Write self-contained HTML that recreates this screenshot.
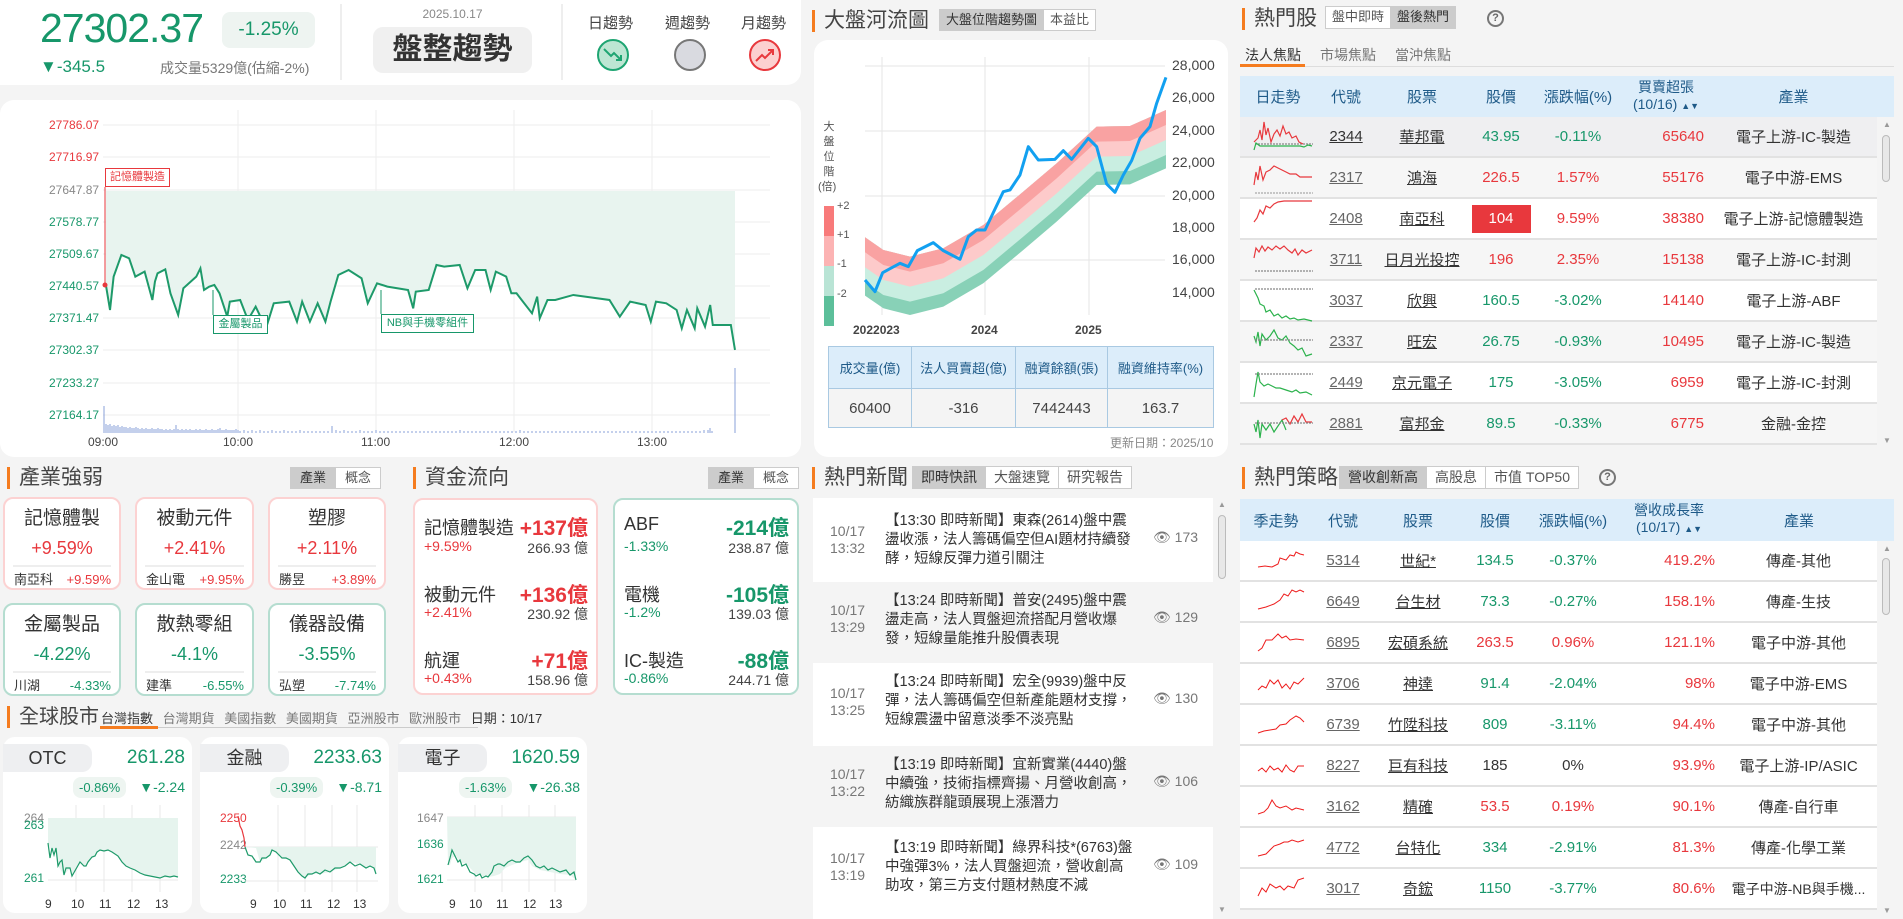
<!DOCTYPE html>
<html><head><meta charset="utf-8">
<style>
*{margin:0;padding:0;box-sizing:border-box}
body{width:1903px;height:919px;background:#f4f4f4;font-family:"Liberation Sans","Noto Sans CJK TC",sans-serif;color:#333;position:relative;overflow:hidden}
.a{position:absolute}
.card{position:absolute;background:#fff;border-radius:14px}
.g{color:#17976a}.r{color:#e8383d}
.ttl{position:absolute;font-size:21px;color:#444;padding-left:9px;border-left:3px solid #f57c1f;line-height:22px}
.tabs{position:absolute;display:flex;border:1px solid #ccc;background:#fff;font-size:13px;color:#555;height:22px}
.tabs span{padding:0 6px;line-height:20px;border-left:1px solid #ccc}
.tabs span:first-child{border-left:none}
.tabs .on{background:#ccc;color:#333}
.ic{position:absolute;border-radius:10px;background:#fff;text-align:center}
.ic.p{border:2px solid #fcd2d2}.ic.q{border:2px solid #b5ddd0}
.ic .n{font-size:19px;color:#333;margin-top:8px;line-height:24px}
.ic .v{font-size:18px;margin-top:6px;line-height:22px}
.ic .hr{margin:6px 8px 0;border-top:2px solid #eee}
.ic .b{display:flex;justify-content:space-between;padding:4px 8px 0 9px;font-size:13px;line-height:18px}
.fr{position:absolute;left:0;right:0;height:24px}
.fr .nm{position:absolute;left:9px;font-size:18px;color:#333;top:2px}
.fr .vl{position:absolute;right:8px;font-size:21px;font-weight:bold}
.fs{position:absolute;left:9px;right:8px;font-size:14px;display:flex;justify-content:space-between}
.fs .c{color:#444}
.th{position:absolute;left:1240px;width:654px;background:#dcedfa;display:flex;color:#1e5a88;font-size:15px;align-items:center}
.row{position:absolute;left:1240px;width:637px;height:41px;display:flex;align-items:center;border-bottom:2px solid #e2e2e2;font-size:15px}
.row>div,.th>div{text-align:center}
.row u{text-decoration:underline}
.cd{color:#666}
.news{position:absolute;left:813px;width:400px;font-size:14.5px;line-height:19px;color:#333}
.news .d{position:absolute;left:17px;font-size:14px;color:#777;line-height:17px}
.news .t{position:absolute;left:72px;width:252px}
.news .e{position:absolute;left:340px;font-size:14px;color:#777}
.mk{position:absolute;background:#fff;border-radius:12px}
.mk .h{position:absolute;left:0;top:7px;width:89px;height:28px;background:#eeeff1;border-radius:0 10px 10px 0;font-size:18px;text-align:center;line-height:28px;color:#333}
.mk .v{position:absolute;right:7px;top:10px;font-size:19px}
.mk .bd{position:absolute;top:40px;height:21px;background:#eef5f1;border-radius:8px;font-size:13px;line-height:21px;padding:0 6px}
.mk .ch{position:absolute;right:7px;top:42px;font-size:14px}
.mk .xl{position:absolute;top:160px;font-size:12px;color:#333}
.mk .yl{position:absolute;font-size:12px}
</style></head><body>

<div class="card" style="left:0;top:0;width:801px;height:85px;border-radius:0 0 14px 0"></div>
<div class="a g" style="left:40px;top:5px;font-size:41px;letter-spacing:-1px">27302.37</div>
<div class="a g" style="left:222px;top:12px;width:93px;height:36px;background:#eef4f1;border-radius:8px;font-size:19px;text-align:center;line-height:36px">-1.25%</div>
<div class="a g" style="left:40px;top:57px;font-size:17px">▼-345.5</div>
<div class="a" style="left:160px;top:58px;font-size:14px;color:#777">成交量5329億(估縮-2%)</div>
<div class="a" style="left:340px;top:4px;width:2px;height:76px;background:#eee"></div>
<div class="a" style="left:373px;top:7px;width:159px;text-align:center;font-size:12px;color:#888">2025.10.17</div>
<div class="a" style="left:373px;top:27px;width:159px;height:46px;background:#f0f0f0;border-radius:10px;text-align:center;font-size:30px;font-weight:bold;line-height:46px;color:#333">盤整趨勢</div>
<div class="a" style="left:561px;top:4px;width:2px;height:76px;background:#eee"></div>
<div class="a" style="left:588px;top:12px;font-size:15px;color:#444">日趨勢</div>
<div class="a" style="left:665px;top:12px;font-size:15px;color:#444">週趨勢</div>
<div class="a" style="left:741px;top:12px;font-size:15px;color:#444">月趨勢</div>

<div class="card" style="left:0;top:100px;width:801px;height:357px"></div>
<div class="a r" style="left:49px;top:118px;font-size:12px">27786.07</div>
<div class="a r" style="left:49px;top:150px;font-size:12px">27716.97</div>
<div class="a" style="left:49px;top:183px;font-size:12px;color:#888">27647.87</div>
<div class="a g" style="left:49px;top:215px;font-size:12px">27578.77</div>
<div class="a g" style="left:49px;top:247px;font-size:12px">27509.67</div>
<div class="a g" style="left:49px;top:279px;font-size:12px">27440.57</div>
<div class="a g" style="left:49px;top:311px;font-size:12px">27371.47</div>
<div class="a g" style="left:49px;top:343px;font-size:12px">27302.37</div>
<div class="a g" style="left:49px;top:376px;font-size:12px">27233.27</div>
<div class="a g" style="left:49px;top:408px;font-size:12px">27164.17</div>
<div class="a" style="left:88px;top:435px;font-size:12px;color:#444">09:00</div>
<div class="a" style="left:223px;top:435px;font-size:12px;color:#444">10:00</div>
<div class="a" style="left:361px;top:435px;font-size:12px;color:#444">11:00</div>
<div class="a" style="left:499px;top:435px;font-size:12px;color:#444">12:00</div>
<div class="a" style="left:637px;top:435px;font-size:12px;color:#444">13:00</div>
<div class="a r" style="left:105px;top:168px;width:65px;height:19px;border:1px solid #e8383d;background:#fff;font-size:11px;text-align:center;line-height:17px;z-index:3">記憶體製造</div>
<div class="a g" style="left:213px;top:315px;width:55px;height:19px;border:1px solid #17976a;background:#fff;font-size:11px;text-align:center;line-height:17px;z-index:3">金屬製品</div>
<div class="a g" style="left:381px;top:314px;width:93px;height:19px;border:1px solid #17976a;background:#fff;font-size:11px;text-align:center;line-height:17px;z-index:3">NB與手機零組件</div>

<div class="ttl" style="left:812px;top:10px">大盤河流圖</div>
<div class="tabs" style="left:939px;top:9px"><span class="on">大盤位階趨勢圖</span><span>本益比</span></div>
<div class="card" style="left:814px;top:40px;width:414px;height:417px"></div>
<div class="a" style="left:1172px;top:57px;font-size:14px;color:#444;line-height:16px">28,000</div>
<div class="a" style="left:1172px;top:89px;font-size:14px;color:#444">26,000</div>
<div class="a" style="left:1172px;top:122px;font-size:14px;color:#444">24,000</div>
<div class="a" style="left:1172px;top:154px;font-size:14px;color:#444">22,000</div>
<div class="a" style="left:1172px;top:187px;font-size:14px;color:#444">20,000</div>
<div class="a" style="left:1172px;top:219px;font-size:14px;color:#444">18,000</div>
<div class="a" style="left:1172px;top:251px;font-size:14px;color:#444">16,000</div>
<div class="a" style="left:1172px;top:284px;font-size:14px;color:#444">14,000</div>
<div class="a" style="left:853px;top:323px;font-size:12px;font-weight:bold;color:#444">2022023</div>
<div class="a" style="left:971px;top:323px;font-size:12px;font-weight:bold;color:#444">2024</div>
<div class="a" style="left:1075px;top:323px;font-size:12px;font-weight:bold;color:#444">2025</div>
<div class="a" style="left:822px;top:120px;width:14px;font-size:11px;color:#555;line-height:15px;text-align:center">大<br>盤<br>位<br>階<br><span style="margin-left:-4px">(倍)</span></div>
<div class="a" style="left:824px;top:206px;width:10px;height:30px;background:#f87a7a"></div>
<div class="a" style="left:824px;top:236px;width:10px;height:30px;background:#fcb3b3"></div>
<div class="a" style="left:824px;top:266px;width:10px;height:30px;background:#b9e4d5"></div>
<div class="a" style="left:824px;top:296px;width:10px;height:30px;background:#5cbf9a"></div>
<div class="a" style="left:837px;top:200px;font-size:11px;color:#555">+2</div>
<div class="a" style="left:837px;top:229px;font-size:11px;color:#555">+1</div>
<div class="a" style="left:837px;top:258px;font-size:11px;color:#555">-1</div>
<div class="a" style="left:837px;top:288px;font-size:11px;color:#555">-2</div>
<table class="a" style="left:828px;top:346px;width:386px;border-collapse:collapse;font-size:13px;text-align:center">
<tr style="height:42px;background:#dcedfa;color:#1e5a88"><td style="border:1px solid #a9c9e2;width:83px">成交量(億)</td><td style="border:1px solid #a9c9e2;width:104px">法人買賣超(億)</td><td style="border:1px solid #a9c9e2;width:92px">融資餘額(張)</td><td style="border:1px solid #a9c9e2">融資維持率(%)</td></tr>
<tr style="height:39px;background:#f4f4f4;font-size:15px;color:#444"><td style="border:1px solid #a9c9e2">60400</td><td style="border:1px solid #a9c9e2">-316</td><td style="border:1px solid #a9c9e2">7442443</td><td style="border:1px solid #a9c9e2">163.7</td></tr>
</table>
<div class="a" style="left:1110px;top:434px;font-size:12px;color:#888">更新日期：2025/10</div>

<div class="ttl" style="left:1242px;top:8px">熱門股</div>
<div class="tabs" style="left:1325px;top:6px;height:23px"><span>盤中即時</span><span class="on">盤後熱門</span></div>
<div class="a" style="left:1487px;top:10px;width:17px;height:17px;border:2px solid #777;border-radius:50%;font-size:11px;text-align:center;line-height:13px;color:#666;font-weight:bold">?</div>
<div class="a" style="left:1240px;top:66px;width:654px;height:1px;background:#ddd"></div>
<div class="a" style="left:1240px;top:64px;width:65px;height:3px;background:#f57c1f"></div>
<div class="a" style="left:1245px;top:45px;font-size:14px;color:#333">法人焦點</div>
<div class="a" style="left:1320px;top:45px;font-size:14px;color:#777">市場焦點</div>
<div class="a" style="left:1395px;top:45px;font-size:14px;color:#777">當沖焦點</div>
<div class="th" style="top:76px;height:41px"><div style="width:76px">日走勢</div><div style="width:60px">代號</div><div style="width:92px">股票</div><div style="width:66px">股價</div><div style="width:88px">漲跌幅(%)</div><div style="width:88px;line-height:17px;font-size:14px">買賣超張<br>(10/16) <span style="font-size:9px">▲▼</span></div><div style="width:167px">產業</div></div>

<div class="row" style="top:117px;background:#efeff1"><div style="width:76px"></div><div style="width:60px"><u>2344</u></div><div style="width:92px"><u>華邦電</u></div><div class="g" style="width:66px">43.95</div><div class="g" style="width:88px">-0.11%</div><div class="r" style="width:88px;text-align:right;padding-right:6px">65640</div><div style="width:167px">電子上游-IC-製造</div></div>
<div class="row" style="top:158px;background:#f6f6f6"><div style="width:76px"></div><div class="cd" style="width:60px"><u>2317</u></div><div style="width:92px"><u>鴻海</u></div><div class="r" style="width:66px">226.5</div><div class="r" style="width:88px">1.57%</div><div class="r" style="width:88px;text-align:right;padding-right:6px">55176</div><div style="width:167px">電子中游-EMS</div></div>
<div class="row" style="top:199px;background:#fff"><div style="width:76px"></div><div class="cd" style="width:60px"><u>2408</u></div><div style="width:92px"><u>南亞科</u></div><div style="width:66px;display:flex;justify-content:center"><span style="background:#e8383d;color:#fff;width:59px;height:28px;line-height:28px">104</span></div><div class="r" style="width:88px">9.59%</div><div class="r" style="width:88px;text-align:right;padding-right:6px">38380</div><div style="width:167px">電子上游-記憶體製造</div></div>
<div class="row" style="top:240px;background:#f6f6f6"><div style="width:76px"></div><div class="cd" style="width:60px"><u>3711</u></div><div style="width:92px"><u>日月光投控</u></div><div class="r" style="width:66px">196</div><div class="r" style="width:88px">2.35%</div><div class="r" style="width:88px;text-align:right;padding-right:6px">15138</div><div style="width:167px">電子上游-IC-封測</div></div>
<div class="row" style="top:281px;background:#fff"><div style="width:76px"></div><div class="cd" style="width:60px"><u>3037</u></div><div style="width:92px"><u>欣興</u></div><div class="g" style="width:66px">160.5</div><div class="g" style="width:88px">-3.02%</div><div class="r" style="width:88px;text-align:right;padding-right:6px">14140</div><div style="width:167px">電子上游-ABF</div></div>
<div class="row" style="top:322px;background:#f6f6f6"><div style="width:76px"></div><div class="cd" style="width:60px"><u>2337</u></div><div style="width:92px"><u>旺宏</u></div><div class="g" style="width:66px">26.75</div><div class="g" style="width:88px">-0.93%</div><div class="r" style="width:88px;text-align:right;padding-right:6px">10495</div><div style="width:167px">電子上游-IC-製造</div></div>
<div class="row" style="top:363px;background:#fff"><div style="width:76px"></div><div class="cd" style="width:60px"><u>2449</u></div><div style="width:92px"><u>京元電子</u></div><div class="g" style="width:66px">175</div><div class="g" style="width:88px">-3.05%</div><div class="r" style="width:88px;text-align:right;padding-right:6px">6959</div><div style="width:167px">電子上游-IC-封測</div></div>
<div class="row" style="top:404px;background:#f6f6f6"><div style="width:76px"></div><div class="cd" style="width:60px"><u>2881</u></div><div style="width:92px"><u>富邦金</u></div><div class="g" style="width:66px">89.5</div><div class="g" style="width:88px">-0.33%</div><div class="r" style="width:88px;text-align:right;padding-right:6px">6775</div><div style="width:167px">金融-金控</div></div>
<div class="a" style="left:1883px;top:120px;font-size:8px;color:#999">▲</div>
<div class="a" style="left:1882px;top:135px;width:8px;height:47px;border:1px solid #bbb;border-radius:4px;background:#e8e8e8"></div>
<div class="a" style="left:1883px;top:436px;font-size:8px;color:#999">▼</div>

<div class="ttl" style="left:7px;top:467px">產業強弱</div>
<div class="tabs" style="left:290px;top:467px"><span class="on" style="padding:0 9px">產業</span><span style="padding:0 9px">概念</span></div>
<div class="ic p" style="left:3px;top:497px;width:118px;height:93px"><div class="n">記憶體製</div><div class="v r">+9.59%</div><div class="hr"></div><div class="b"><span>南亞科</span><span class="r">+9.59%</span></div></div>
<div class="ic p" style="left:135px;top:497px;width:119px;height:93px"><div class="n">被動元件</div><div class="v r">+2.41%</div><div class="hr"></div><div class="b"><span>金山電</span><span class="r">+9.95%</span></div></div>
<div class="ic p" style="left:268px;top:497px;width:118px;height:93px"><div class="n">塑膠</div><div class="v r">+2.11%</div><div class="hr"></div><div class="b"><span>勝昱</span><span class="r">+3.89%</span></div></div>
<div class="ic q" style="left:3px;top:603px;width:118px;height:93px"><div class="n">金屬製品</div><div class="v g">-4.22%</div><div class="hr"></div><div class="b"><span>川湖</span><span class="g">-4.33%</span></div></div>
<div class="ic q" style="left:135px;top:603px;width:119px;height:93px"><div class="n">散熱零組</div><div class="v g">-4.1%</div><div class="hr"></div><div class="b"><span>建準</span><span class="g">-6.55%</span></div></div>
<div class="ic q" style="left:268px;top:603px;width:118px;height:93px"><div class="n">儀器設備</div><div class="v g">-3.55%</div><div class="hr"></div><div class="b"><span>弘塑</span><span class="g">-7.74%</span></div></div>

<div class="ttl" style="left:413px;top:467px">資金流向</div>
<div class="tabs" style="left:708px;top:467px"><span class="on" style="padding:0 9px">產業</span><span style="padding:0 9px">概念</span></div>
<div class="ic p" style="left:413px;top:498px;width:185px;height:197px;text-align:left">
 <div class="fr" style="top:12px"><span class="nm">記憶體製造</span><span class="vl r">+137億</span></div>
 <div class="fs" style="top:38px"><span class="r">+9.59%</span><span class="c">266.93 億</span></div>
 <div class="fr" style="top:79px"><span class="nm">被動元件</span><span class="vl r">+136億</span></div>
 <div class="fs" style="top:104px"><span class="r">+2.41%</span><span class="c">230.92 億</span></div>
 <div class="fr" style="top:145px"><span class="nm">航運</span><span class="vl r">+71億</span></div>
 <div class="fs" style="top:170px"><span class="r">+0.43%</span><span class="c">158.96 億</span></div>
</div>
<div class="ic q" style="left:613px;top:498px;width:186px;height:197px;text-align:left">
 <div class="fr" style="top:12px"><span class="nm">ABF</span><span class="vl g">-214億</span></div>
 <div class="fs" style="top:38px"><span class="g">-1.33%</span><span class="c">238.87 億</span></div>
 <div class="fr" style="top:79px"><span class="nm">電機</span><span class="vl g">-105億</span></div>
 <div class="fs" style="top:104px"><span class="g">-1.2%</span><span class="c">139.03 億</span></div>
 <div class="fr" style="top:145px"><span class="nm">IC-製造</span><span class="vl g">-88億</span></div>
 <div class="fs" style="top:170px"><span class="g">-0.86%</span><span class="c">244.71 億</span></div>
</div>

<div class="ttl" style="left:7px;top:706px;font-size:20px;line-height:22px">全球股市</div>
<div class="a" style="left:158px;top:727px;width:320px;height:1px;background:#ccc"></div>
<div class="a" style="left:100px;top:726px;width:58px;height:3px;background:#f57c1f"></div>
<div class="a" style="left:101px;top:708px;font-size:13px;color:#333;word-spacing:6px;white-space:nowrap">台灣指數 <span style="color:#777">台灣期貨 美國指數 美國期貨 亞洲股市 歐洲股市</span> 日期：10/17</div>

<div class="mk" style="left:3px;top:737px;width:189px;height:176px"><div class="h">OTC</div><div class="v g">261.28</div><div class="bd g" style="left:70px">-0.86%</div><div class="ch g">▼-2.24</div>
 <div class="yl" style="left:21px;top:74px;color:#888">264</div><div class="yl g" style="left:21px;top:81px">263</div><div class="yl g" style="left:21px;top:134px">261</div>
 <div class="xl" style="left:42px">9</div><div class="xl" style="left:68px">10</div><div class="xl" style="left:96px">11</div><div class="xl" style="left:124px">12</div><div class="xl" style="left:152px">13</div></div>
<div class="mk" style="left:200px;top:737px;width:189px;height:176px"><div class="h">金融</div><div class="v g">2233.63</div><div class="bd g" style="left:70px">-0.39%</div><div class="ch g">▼-8.71</div>
 <div class="yl r" style="left:20px;top:74px">2250</div><div class="yl" style="left:20px;top:101px;color:#888">2242</div><div class="yl g" style="left:20px;top:135px">2233</div>
 <div class="xl" style="left:50px">9</div><div class="xl" style="left:73px">10</div><div class="xl" style="left:100px">11</div><div class="xl" style="left:127px">12</div><div class="xl" style="left:153px">13</div></div>
<div class="mk" style="left:398px;top:737px;width:189px;height:176px"><div class="h">電子</div><div class="v g">1620.59</div><div class="bd g" style="left:61px">-1.63%</div><div class="ch g">▼-26.38</div>
 <div class="yl" style="left:19px;top:74px;color:#888">1647</div><div class="yl g" style="left:19px;top:100px">1636</div><div class="yl g" style="left:19px;top:135px">1621</div>
 <div class="xl" style="left:51px">9</div><div class="xl" style="left:71px">10</div><div class="xl" style="left:98px">11</div><div class="xl" style="left:125px">12</div><div class="xl" style="left:151px">13</div></div>

<div class="ttl" style="left:812px;top:467px">熱門新聞</div>
<div class="tabs" style="left:912px;top:466px;height:23px;font-size:14px"><span class="on" style="padding:0 8px">即時快訊</span><span style="padding:0 8px">大盤速覽</span><span style="padding:0 8px">研究報告</span></div>
<div class="news" style="top:498px;height:84px;background:#fff"><div class="d" style="top:25px">10/17<br>13:32</div><div class="t" style="top:14px">【13:30 即時新聞】東森(2614)盤中震盪收漲，法人籌碼偏空但AI題材持續發酵，短線反彈力道引關注</div><div class="e" style="top:30px">👁 173</div></div>
<div class="news" style="top:582px;height:81px;background:#f4f4f4"><div class="d" style="top:20px">10/17<br>13:29</div><div class="t" style="top:10px">【13:24 即時新聞】普安(2495)盤中震盪走高，法人買盤迴流搭配月營收爆發，短線量能推升股價表現</div><div class="e" style="top:26px">👁 129</div></div>
<div class="news" style="top:663px;height:83px;background:#fff"><div class="d" style="top:22px">10/17<br>13:25</div><div class="t" style="top:10px">【13:24 即時新聞】宏全(9939)盤中反彈，法人籌碼偏空但新產能題材支撐，短線震盪中留意淡季不淡亮點</div><div class="e" style="top:26px">👁 130</div></div>
<div class="news" style="top:746px;height:81px;background:#f4f4f4"><div class="d" style="top:20px">10/17<br>13:22</div><div class="t" style="top:10px">【13:19 即時新聞】宜新實業(4440)盤中續強，技術指標齊揚、月營收創高，紡織族群龍頭展現上漲潛力</div><div class="e" style="top:26px">👁 106</div></div>
<div class="news" style="top:827px;height:92px;background:#fff"><div class="d" style="top:23px">10/17<br>13:19</div><div class="t" style="top:12px">【13:19 即時新聞】綠界科技*(6763)盤中強彈3%，法人買盤迴流，營收創高助攻，第三方支付題材熱度不減</div><div class="e" style="top:28px">👁 109</div></div>
<div class="a" style="left:1218px;top:500px;font-size:8px;color:#999">▲</div>
<div class="a" style="left:1218px;top:515px;width:8px;height:64px;border:1px solid #bbb;border-radius:4px;background:#e8e8e8"></div>
<div class="a" style="left:1218px;top:905px;font-size:8px;color:#999">▼</div>

<div class="ttl" style="left:1242px;top:467px">熱門策略</div>
<div class="tabs" style="left:1339px;top:466px;height:23px;font-size:14px"><span class="on" style="padding:0 8px">營收創新高</span><span style="padding:0 8px">高股息</span><span style="padding:0 8px">市值 TOP50</span></div>
<div class="a" style="left:1599px;top:469px;width:17px;height:17px;border:2px solid #777;border-radius:50%;font-size:11px;text-align:center;line-height:13px;color:#666;font-weight:bold">?</div>
<div class="th" style="top:499px;height:42px"><div style="width:72px">季走勢</div><div style="width:62px">代號</div><div style="width:88px">股票</div><div style="width:66px">股價</div><div style="width:90px">漲跌幅(%)</div><div style="width:102px;line-height:17px;font-size:14px">營收成長率<br>(10/17) <span style="font-size:9px">▲▼</span></div><div style="width:158px">產業</div></div>

<div class="row" style="top:541px;background:#fff"><div style="width:72px"></div><div class="cd" style="width:62px"><u>5314</u></div><div style="width:88px"><u>世紀*</u></div><div class="g" style="width:66px">134.5</div><div class="g" style="width:90px">-0.37%</div><div class="r" style="width:102px;text-align:right;padding-right:5px">419.2%</div><div style="width:157px">傳產-其他</div></div>
<div class="row" style="top:582px;background:#fff"><div style="width:72px"></div><div class="cd" style="width:62px"><u>6649</u></div><div style="width:88px"><u>台生材</u></div><div class="g" style="width:66px">73.3</div><div class="g" style="width:90px">-0.27%</div><div class="r" style="width:102px;text-align:right;padding-right:5px">158.1%</div><div style="width:157px">傳產-生技</div></div>
<div class="row" style="top:623px;background:#fff"><div style="width:72px"></div><div class="cd" style="width:62px"><u>6895</u></div><div style="width:88px"><u>宏碩系統</u></div><div class="r" style="width:66px">263.5</div><div class="r" style="width:90px">0.96%</div><div class="r" style="width:102px;text-align:right;padding-right:5px">121.1%</div><div style="width:157px">電子中游-其他</div></div>
<div class="row" style="top:664px;background:#fff"><div style="width:72px"></div><div class="cd" style="width:62px"><u>3706</u></div><div style="width:88px"><u>神達</u></div><div class="g" style="width:66px">91.4</div><div class="g" style="width:90px">-2.04%</div><div class="r" style="width:102px;text-align:right;padding-right:5px">98%</div><div style="width:157px">電子中游-EMS</div></div>
<div class="row" style="top:705px;background:#fff"><div style="width:72px"></div><div class="cd" style="width:62px"><u>6739</u></div><div style="width:88px"><u>竹陞科技</u></div><div class="g" style="width:66px">809</div><div class="g" style="width:90px">-3.11%</div><div class="r" style="width:102px;text-align:right;padding-right:5px">94.4%</div><div style="width:157px">電子中游-其他</div></div>
<div class="row" style="top:746px;background:#fff"><div style="width:72px"></div><div class="cd" style="width:62px"><u>8227</u></div><div style="width:88px"><u>巨有科技</u></div><div style="width:66px">185</div><div style="width:90px">0%</div><div class="r" style="width:102px;text-align:right;padding-right:5px">93.9%</div><div style="width:157px">電子上游-IP/ASIC</div></div>
<div class="row" style="top:787px;background:#fff"><div style="width:72px"></div><div class="cd" style="width:62px"><u>3162</u></div><div style="width:88px"><u>精確</u></div><div class="r" style="width:66px">53.5</div><div class="r" style="width:90px">0.19%</div><div class="r" style="width:102px;text-align:right;padding-right:5px">90.1%</div><div style="width:157px">傳產-自行車</div></div>
<div class="row" style="top:828px;background:#fff"><div style="width:72px"></div><div class="cd" style="width:62px"><u>4772</u></div><div style="width:88px"><u>台特化</u></div><div class="g" style="width:66px">334</div><div class="g" style="width:90px">-2.91%</div><div class="r" style="width:102px;text-align:right;padding-right:5px">81.3%</div><div style="width:157px">傳產-化學工業</div></div>
<div class="row" style="top:869px;background:#fff"><div style="width:72px"></div><div class="cd" style="width:62px"><u>3017</u></div><div style="width:88px"><u>奇鋐</u></div><div class="g" style="width:66px">1150</div><div class="g" style="width:90px">-3.77%</div><div class="r" style="width:102px;text-align:right;padding-right:5px">80.6%</div><div style="width:157px;white-space:nowrap;overflow:hidden;font-size:14px">電子中游-NB與手機...</div></div>
<div class="a" style="left:1883px;top:544px;font-size:8px;color:#999">▲</div>
<div class="a" style="left:1882px;top:558px;width:8px;height:57px;border:1px solid #bbb;border-radius:4px;background:#e8e8e8"></div>
<div class="a" style="left:1883px;top:906px;font-size:8px;color:#999">▼</div>

<svg class="a" style="left:0;top:0;z-index:2;pointer-events:none" width="1903" height="919" viewBox="0 0 1903 919">
 <circle cx="613" cy="55" r="15" fill="#bde6d3" stroke="#1ea572" stroke-width="2"/>
 <path d="M604,49 L611,56 L614,53 L621,60 M616,60 L621,60 L621,55" fill="none" stroke="#1ea572" stroke-width="2"/>
 <circle cx="690" cy="55" r="15" fill="#d9dae0" stroke="#777" stroke-width="2"/>
 <circle cx="765" cy="55" r="15" fill="#fcd0d0" stroke="#e8383d" stroke-width="2"/>
 <path d="M756,61 L762,55 L765,58 L773,50 M768,50 L773,50 L773,55" fill="none" stroke="#e8383d" stroke-width="2"/>

 <g stroke="#eee" stroke-width="1">
  <line x1="103" y1="125" x2="770" y2="125"/><line x1="103" y1="157" x2="770" y2="157"/><line x1="103" y1="190" x2="770" y2="190"/><line x1="103" y1="222" x2="770" y2="222"/><line x1="103" y1="254" x2="770" y2="254"/><line x1="103" y1="286" x2="770" y2="286"/><line x1="103" y1="318" x2="770" y2="318"/><line x1="103" y1="350" x2="770" y2="350"/><line x1="103" y1="383" x2="770" y2="383"/><line x1="103" y1="415" x2="770" y2="415"/>
  <line x1="238" y1="110" x2="238" y2="432"/><line x1="376" y1="110" x2="376" y2="432"/><line x1="514" y1="110" x2="514" y2="432"/><line x1="652" y1="110" x2="652" y2="432"/>
 </g>
 <g transform="scale(0.5165 0.3333)">
  <path d="M205,573 L205,855 L213,930 L220,830 L235,765 L250,775 L262,830 L280,815 L295,900 L300,845 L305,820 L320,808 L330,880 L345,945 L355,865 L380,830 L388,805 L395,870 L405,860 L415,855 L425,880 L440,950 L445,905 L465,900 L480,960 L495,920 L515,985 L530,910 L560,905 L575,965 L585,905 L600,965 L615,910 L630,965 L640,905 L655,825 L675,810 L700,835 L712,910 L730,850 L750,860 L790,870 L800,925 L805,875 L830,870 L845,795 L860,800 L890,795 L905,865 L920,810 L940,810 L950,870 L960,815 L980,830 L990,880 L1000,880 L1010,900 L1030,940 L1040,890 L1045,955 L1060,900 L1075,900 L1110,885 L1180,900 L1200,950 L1220,905 L1250,915 L1260,965 L1270,905 L1290,910 L1310,930 L1320,985 L1330,930 L1345,985 L1350,925 L1365,980 L1375,915 L1380,975 L1415,975 L1423,1050 L1423,573 Z" fill="#e8f4ef"/>
  <path d="M205,855 L213,930 L220,830 L235,765 L250,775 L262,830 L280,815 L295,900 L300,845 L305,820 L320,808 L330,880 L345,945 L355,865 L380,830 L388,805 L395,870 L405,860 L415,855 L425,880 L440,950 L445,905 L465,900 L480,960 L495,920 L515,985 L530,910 L560,905 L575,965 L585,905 L600,965 L615,910 L630,965 L640,905 L655,825 L675,810 L700,835 L712,910 L730,850 L750,860 L790,870 L800,925 L805,875 L830,870 L845,795 L860,800 L890,795 L905,865 L920,810 L940,810 L950,870 L960,815 L980,830 L990,880 L1000,880 L1010,900 L1030,940 L1040,890 L1045,955 L1060,900 L1075,900 L1110,885 L1180,900 L1200,950 L1220,905 L1250,915 L1260,965 L1270,905 L1290,910 L1310,930 L1320,985 L1330,930 L1345,985 L1350,925 L1365,980 L1375,915 L1380,975 L1415,975 L1423,1050" fill="none" stroke="#1e9a6a" stroke-width="2" vector-effect="non-scaling-stroke"/>
 </g>
 <line x1="105" y1="187" x2="105" y2="285" stroke="#e8383d"/><circle cx="105" cy="285" r="2.5" fill="#e8383d"/>
 <line x1="213" y1="290" x2="213" y2="315" stroke="#17976a"/>
 <line x1="381" y1="290" x2="381" y2="314" stroke="#17976a"/>
 <g stroke="#8aa0d8" stroke-width="1">
  <line x1="104" y1="433" x2="104" y2="406"/>
  <path d="M106,433V424M108,433V425M110,433V424M112,433V426M114,433V425M116,433V426M118,433V425M120,433V427M122,433V426M124,433V427M126,433V427M128,433V428M130,433V427M132,433V428M134,433V428M136,433V427M138,433V428M140,433V429M142,433V428M144,433V429M146,433V428M148,433V429M150,433V429M152,433V428M154,433V429M156,433V429M158,433V428M160,433V429M162,433V429M164,433V430M166,433V429M168,433V430M170,433V429M172,433V430M174,433V429M176,433V425M178,433V429M180,433V430M182,433V429M184,433V430M186,433V429M188,433V430M190,433V429M192,433V430M194,433V430M196,433V429M198,433V430M200,433V429M202,433V430M204,433V430M206,433V429M208,433V430M210,433V430M212,433V429M214,433V430M216,433V430M218,433V429M220,433V428M222,433V430M224,433V430M226,433V429M228,433V430M230,433V430M232,433V430M234,433V430M236,433V429M238,433V430"/>
  <path d="M240,433V431M244,433V430M248,433V431M252,433V430M256,433V431M260,433V430M264,433V431M268,433V431M272,433V430M276,433V431M280,433V431M284,433V430M288,433V431M292,433V431M296,433V431M300,433V430M304,433V431M308,433V431M312,433V431M316,433V431M320,433V431M324,433V431M328,433V431M332,433V426M336,433V430M340,433V431M344,433V430M348,433V431M352,433V431M356,433V431M360,433V430M364,433V431M368,433V431M372,433V431M376,433V430M380,433V431M384,433V431M388,433V431M392,433V431M396,433V431M400,433V431M404,433V431M408,433V431M412,433V431M416,433V431M420,433V431M424,433V431M428,433V431M432,433V431M436,433V431M440,433V431M444,433V431M448,433V431M452,433V431M456,433V431M460,433V430M464,433V431M468,433V431M472,433V431M476,433V431M480,433V431M484,433V431M488,433V431M492,433V431M496,433V431M500,433V431M504,433V431M508,433V431M512,433V431M516,433V431M520,433V430M524,433V431M528,433V431M532,433V431M536,433V431M540,433V431M544,433V431M548,433V431M552,433V431M556,433V431M560,433V431M564,433V431M568,433V431M572,433V431M576,433V431M580,433V431M584,433V431M588,433V431M592,433V431M596,433V431M600,433V431M604,433V431M608,433V431M612,433V431M616,433V431M620,433V431M624,433V431M628,433V431M632,433V431M636,433V431M640,433V431M644,433V431M648,433V431M652,433V431M656,433V431M660,433V431M664,433V431M668,433V431M672,433V431M676,433V431M680,433V431M684,433V431M688,433V431M692,433V431M696,433V431M700,433V431M704,433V430M708,433V430M710,433V428M712,433V431"/>
  <line x1="735" y1="433" x2="735" y2="368"/>
 </g>

 <g stroke="#e6e6e6"><line x1="865" y1="66" x2="1165" y2="66"/><line x1="865" y1="131" x2="1165" y2="131"/><line x1="865" y1="196" x2="1165" y2="196"/><line x1="865" y1="260" x2="1165" y2="260"/><line x1="882" y1="57" x2="882" y2="315"/><line x1="985" y1="57" x2="985" y2="315"/><line x1="1089" y1="57" x2="1089" y2="315"/></g>
 <g transform="translate(810 0) scale(0.3333)">
  <polygon fill="#88d1b7" points="165,712 220,750 300,770 400,745 520,675 640,575 740,490 860,380 960,378 1068,330 1068,505 960,553 860,555 740,665 640,750 520,850 400,920 300,945 220,925 165,887"/>
  <polygon fill="#c9eee1" points="165,712 220,750 300,770 400,745 520,675 640,575 740,490 860,380 960,378 1068,330 1068,465 960,513 860,515 740,625 640,710 520,810 400,880 300,905 220,885 165,847"/>
  <polygon fill="#fdcaca" points="165,712 220,750 300,770 400,745 520,675 640,575 740,490 860,380 960,378 1068,330 1068,420 960,468 860,470 740,580 640,665 520,765 400,835 300,860 220,840 165,802"/>
  <polygon fill="#f9a2a2" points="165,712 220,750 300,770 400,745 520,675 640,575 740,490 860,380 960,378 1068,330 1068,375 960,423 860,425 740,535 640,620 520,720 400,790 300,815 220,795 165,757"/>
  <polyline fill="none" stroke="#12a0f0" stroke-width="9" stroke-linejoin="round" points="165,840 195,875 218,818 270,790 295,800 322,752 370,728 400,752 450,778 475,710 500,690 525,690 580,575 600,570 630,525 655,440 685,480 735,478 760,452 785,478 835,415 860,440 890,552 915,577 940,525 965,482 990,415 1020,380 1040,310 1068,232"/>
 </g>

 <g fill="none" stroke-width="1.2">
  <line x1="1255" y1="144" x2="1313" y2="144" stroke="#888" stroke-dasharray="2 1"/>
  <polyline stroke="#e8383d" points="1254,142 1258,138 1260,130 1262,140 1264,122 1266,135 1268,128 1271,142 1274,134 1277,130 1280,136 1283,126 1286,134 1289,132 1292,138 1296,136 1299,142 1303,144"/>
  <polyline stroke="#2bb24c" points="1254,150 1256,143 1260,146 1300,146 1304,147 1308,145 1312,146"/>
  <polyline stroke="#e8383d" points="1254,185 1256,172 1258,180 1260,166 1263,180 1266,172 1270,170 1274,166 1278,168 1282,170 1286,172 1290,174 1296,174 1300,177 1312,177"/>
  <line x1="1255" y1="193" x2="1313" y2="193" stroke="#aaa" stroke-dasharray="2 1"/>
  <polyline stroke="#e8383d" points="1254,222 1257,218 1260,210 1263,214 1266,206 1270,208 1274,204 1278,202 1284,201 1312,201"/>
  <polyline stroke="#e8383d" points="1254,258 1256,248 1259,252 1262,246 1265,251 1268,247 1272,250 1276,246 1280,249 1284,246 1288,250 1292,253 1295,249 1298,255 1302,250 1306,253 1312,250"/>
  <line x1="1255" y1="271" x2="1313" y2="271" stroke="#888" stroke-dasharray="2 1"/>
  <polyline stroke="#2bb24c" points="1254,290 1258,298 1260,304 1264,306 1266,312 1270,310 1274,316 1278,314 1282,318 1286,316 1290,319 1294,318 1298,320 1304,319 1312,321"/>
  <line x1="1255" y1="289" x2="1313" y2="289" stroke="#888" stroke-dasharray="2 1"/>
  <polyline stroke="#2bb24c" points="1254,336 1256,342 1258,332 1260,346 1262,334 1266,340 1270,336 1274,330 1278,338 1282,340 1286,336 1290,343 1294,346 1298,350 1302,348 1306,356 1312,354"/>
  <line x1="1255" y1="340" x2="1313" y2="340" stroke="#888" stroke-dasharray="2 1"/>
  <polyline stroke="#2bb24c" points="1254,397 1256,384 1258,372 1260,382 1264,386 1268,384 1272,386 1276,388 1280,388 1286,390 1292,392 1296,390 1300,393 1306,392 1312,395"/>
  <line x1="1255" y1="374" x2="1313" y2="374" stroke="#888" stroke-dasharray="2 1"/>
  <polyline stroke="#2bb24c" points="1254,424 1256,432 1258,420 1260,438 1262,424 1266,430 1270,424 1274,432 1278,426 1282,420 1286,430"/>
  <polyline stroke="#e8383d" points="1282,420 1286,418 1290,424 1294,416 1298,422 1302,414 1306,422 1312,422"/>
  <line x1="1255" y1="423" x2="1313" y2="423" stroke="#888" stroke-dasharray="2 1"/>
 </g>
 <g fill="none" stroke="#ee1c1c" stroke-width="1">
  <polyline points="1258,567 1265,566 1272,567 1278,564 1280,558 1286,560 1290,555 1294,556 1296,552 1300,554 1304,555"/>
  <polyline points="1258,609 1266,607 1274,604 1280,600 1284,594 1288,596 1292,590 1296,592 1300,590 1304,592"/>
  <polyline points="1258,651 1262,648 1266,640 1272,640 1278,634 1282,638 1286,636 1290,640 1296,639 1304,640"/>
  <polyline points="1258,690 1262,686 1266,688 1270,680 1274,684 1278,680 1282,688 1286,684 1290,689 1294,682 1298,684 1304,678"/>
  <polyline points="1258,733 1264,731 1270,730 1276,729 1280,725 1286,724 1290,720 1296,716 1300,718 1304,722"/>
  <polyline points="1258,771 1262,768 1266,772 1270,766 1274,770 1278,768 1282,772 1286,765 1290,770 1294,772 1298,766 1304,766"/>
  <polyline points="1258,814 1264,812 1268,808 1272,800 1276,806 1280,808 1286,806 1292,810 1296,808 1304,810"/>
  <polyline points="1258,856 1266,854 1270,850 1274,846 1280,844 1284,842 1288,842 1292,840 1298,842 1304,840"/>
  <polyline points="1258,896 1262,888 1266,892 1270,884 1276,888 1280,886 1284,890 1288,886 1294,888 1298,880 1304,878"/>
 </g>

 <g stroke="#e8e8e8"><line x1="48" y1="820" x2="178" y2="820"/><line x1="48" y1="880" x2="178" y2="880"/><line x1="76" y1="805" x2="76" y2="892"/><line x1="104" y1="805" x2="104" y2="892"/><line x1="132" y1="805" x2="132" y2="892"/><line x1="160" y1="805" x2="160" y2="892"/>
  <line x1="245" y1="847" x2="378" y2="847"/><line x1="245" y1="881" x2="378" y2="881"/><line x1="278" y1="805" x2="278" y2="892"/><line x1="305" y1="805" x2="305" y2="892"/><line x1="332" y1="805" x2="332" y2="892"/><line x1="357" y1="805" x2="357" y2="892"/>
  <line x1="447" y1="817" x2="576" y2="817"/><line x1="447" y1="880" x2="576" y2="880"/><line x1="475" y1="805" x2="475" y2="892"/><line x1="502" y1="805" x2="502" y2="892"/><line x1="529" y1="805" x2="529" y2="892"/><line x1="555" y1="805" x2="555" y2="892"/></g>
 <path d="M48,818 L178,818 L178,876 L170,877 L160,878 L150,876 L140,873 L130,868 L122,862 L118,856 L112,852 L108,850 L100,850 L95,856 L92,857 L86,866 L80,862 L76,869 L72,876 L70,868 L64,875 L58,866 L56,848 L52,852 L48,843 Z" fill="#e6f4ee"/>
 <polyline fill="none" stroke="#1e9a6a" stroke-width="1.2" points="48,843 50,858 52,848 54,855 56,848 58,866 60,862 62,860 64,875 66,868 70,868 72,876 76,869 80,862 84,866 86,866 88,862 92,857 95,856 97,852 100,850 104,851 108,850 112,852 118,856 122,862 126,866 130,868 135,870 140,873 145,875 150,876 155,877 160,878 165,876 170,877 174,876 178,877"/>
 <path d="M245,847 L376,847 L376,874 L372,866 L366,868 L360,864 L350,862 L340,868 L330,872 L320,874 L312,874 L305,878 L298,872 L290,860 L282,858 L276,852 L272,850 L270,855 L266,858 L260,862 L256,848 Z" fill="#e6f4ee"/>
 <polyline fill="none" stroke="#e8383d" stroke-width="1.2" points="238,816 240,826 242,830 244,838 245,847"/>
 <polyline fill="none" stroke="#1e9a6a" stroke-width="1.2" points="245,847 248,855 252,856 256,862 260,862 262,858 266,858 270,855 272,850 276,852 280,856 282,858 286,858 290,860 294,866 298,872 302,876 305,878 308,874 312,874 316,872 320,874 325,870 330,872 335,868 340,868 345,866 350,862 355,866 360,864 366,868 370,866 374,868 376,874"/>
 <path d="M447,817 L576,817 L576,880 L570,875 L560,874 L550,872 L540,870 L532,866 L528,860 L520,862 L512,865 L505,868 L500,874 L494,876 L488,877 L482,876 L476,874 L470,868 L466,864 L460,862 L456,856 L452,858 L450,865 L448,865 Z" fill="#e6f4ee"/>
 <polyline fill="none" stroke="#1e9a6a" stroke-width="1.2" points="448,865 450,858 452,850 455,856 458,862 460,860 462,866 466,864 468,868 470,872 474,874 476,876 480,874 482,878 486,876 488,877 492,872 494,866 498,864 500,864 504,866 508,862 512,860 516,862 520,862 524,858 528,856 532,860 536,866 540,868 544,866 548,870 552,868 556,870 560,872 566,870 570,875 574,872 576,880"/>
</svg>
</body></html>
